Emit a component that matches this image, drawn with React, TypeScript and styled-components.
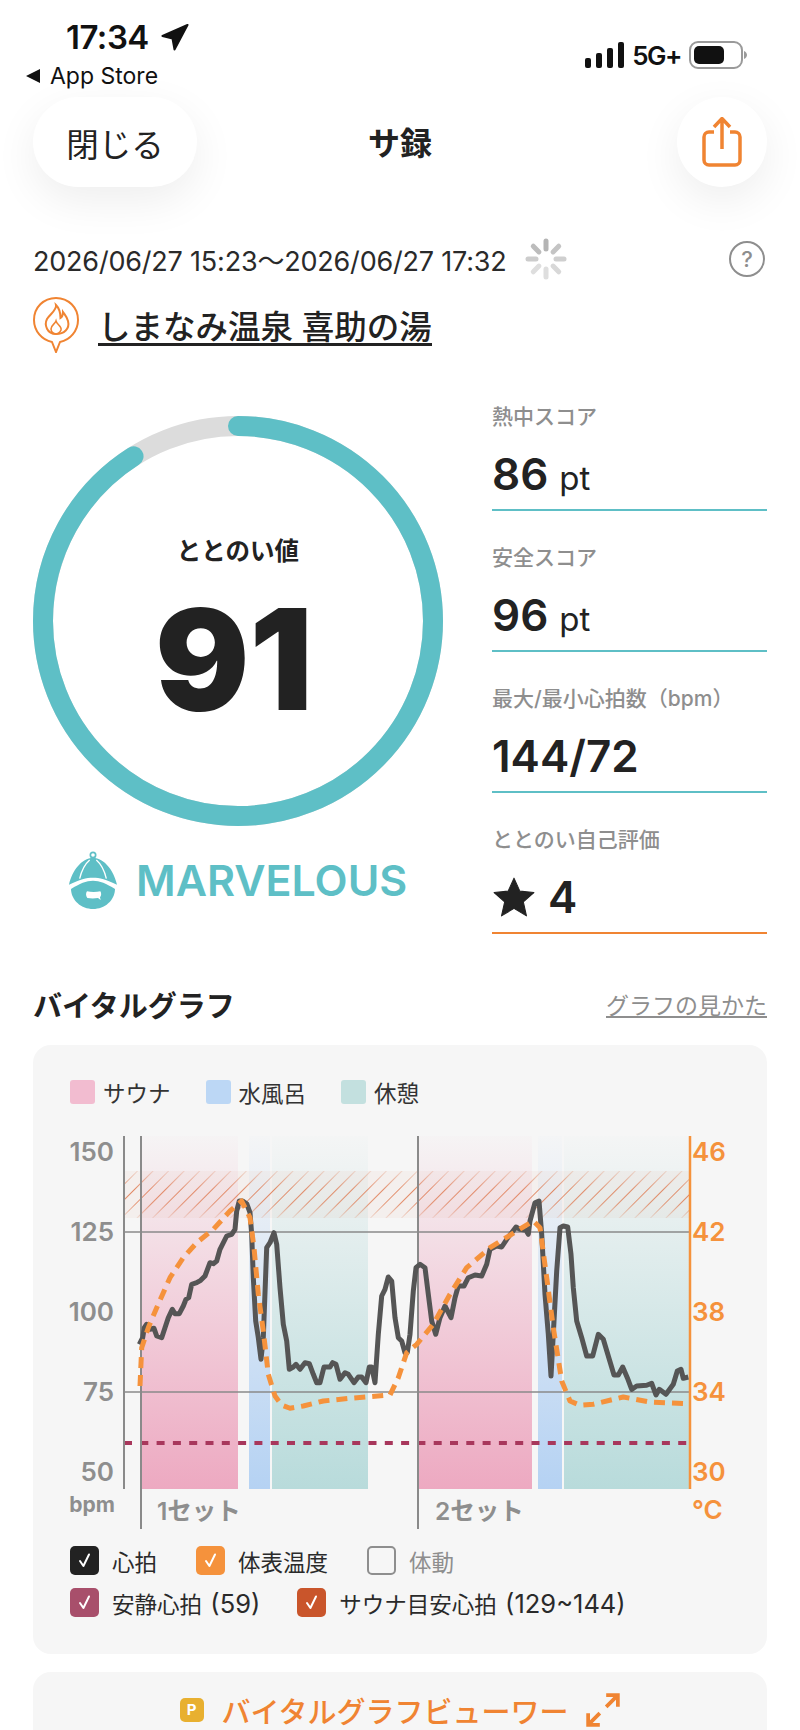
import React from 'react';
import styled, { createGlobalStyle } from 'styled-components';

const INK = '#222222';
const TEAL = '#5ebfc6';
const ORANGE = '#f08432';
const TEMP = '#f5923c';
const GREY = '#8e8e8e';

const GlobalStyle = createGlobalStyle`
    html, body {
        margin: 0;
        padding: 0;
        background: #fff;
    }
    body {
        font-family: Inter, "Noto Sans CJK JP", sans-serif;
        color: ${INK};
    }
    * {
        box-sizing: border-box;
    }
`;

// zoomed-crop coordinates of the traces, mapped back to page pixels below
const heartA = [
    [268, 670], [278, 650], [283, 620], [290, 610], [300, 625], [312, 622], [320, 645], [335, 650], [345, 620],
    [355, 590], [367, 565], [375, 578], [388, 578], [400, 555], [408, 535], [416, 530], [425, 490], [440, 485],
    [452, 478], [465, 465], [480, 425], [490, 428], [500, 420], [510, 385], [530, 345], [545, 340], [555, 325],
    [560, 270], [568, 240], [578, 240], [590, 248], [600, 275], [605, 340], [610, 470], [617, 600], [625, 650],
    [633, 715], [640, 650], [650, 380], [660, 365], [672, 335], [680, 370], [690, 500], [700, 610], [710, 660],
    [718, 745], [730, 738], [738, 730], [750, 745], [765, 725], [778, 728], [790, 760], [800, 785], [810, 785],
    [822, 738], [840, 738], [848, 725], [858, 730], [870, 775], [885, 755], [895, 760], [912, 785], [925, 768],
    [935, 768], [948, 785], [958, 738], [965, 738], [975, 785], [985, 640], [995, 525], [1005, 505], [1015, 468],
];
const heartB = [
    [5, 480], [15, 590], [25, 650], [35, 660], [45, 695], [52, 695], [60, 640], [70, 510], [78, 440], [90, 430],
    [105, 440], [115, 520], [125, 600], [137, 640], [150, 590], [165, 555], [183, 590], [195, 530], [205, 495],
    [222, 495], [235, 470], [255, 462], [275, 465], [290, 430], [300, 385], [320, 375], [335, 378], [350, 355],
    [378, 318], [390, 325], [408, 328], [415, 340], [420, 300], [435, 245], [447, 240], [455, 340], [465, 520],
    [475, 640], [483, 765], [492, 600], [500, 450], [510, 320], [520, 315], [533, 318], [543, 400], [550, 500],
    [560, 600], [575, 650], [590, 705], [608, 705], [625, 640], [640, 655], [655, 705], [672, 762], [685, 762],
    [698, 738], [712, 770], [725, 805], [740, 795], [770, 793], [785, 787], [798, 822], [808, 805], [828, 820],
    [850, 790], [862, 750], [873, 745], [880, 772], [895, 768],
];
const tempA = [
    [270, 795], [275, 680], [295, 620], [320, 560], [360, 470], [400, 410], [440, 365], [490, 325], [540, 270],
    [575, 240], [600, 290], [612, 380], [625, 520], [640, 630], [655, 760], [675, 825], [695, 852], [720, 862],
    [760, 855], [820, 840], [900, 832], [1020, 822],
];
const tempB = [
    [25, 770], [50, 695], [80, 670], [130, 610], [180, 520], [230, 440], [300, 380], [380, 330], [430, 300],
    [450, 320], [470, 470], [490, 620], [515, 780], [540, 840], [570, 853], [610, 850], [700, 828], [780, 843],
    [900, 848],
];

function toPoints(a: number[][], b: number[][]) {
    const left = a.map(([x, y]) => `${(x / 3 + 50).toFixed(1)},${(y / 3 + 1120).toFixed(1)}`);
    const right = b.map(([x, y]) => `${(x / 3 + 390).toFixed(1)},${(y / 3 + 1120).toFixed(1)}`);
    return [...left, ...right].join(' ');
}

const spinnerRays = [0, 45, 90, 135, 180, 225, 270, 315];
const spinnerShades = ['#b4b4b4', '#c4c4c4', '#cfcfcf', '#d8d8d8', '#dedede', '#dedede', '#cccccc', '#bcbcbc'];

const bpmTicks = [
    { label: '150', y: 1160 },
    { label: '125', y: 1240 },
    { label: '100', y: 1320 },
    { label: '75', y: 1400 },
    { label: '50', y: 1480 },
];
const tempTicks = [
    { label: '46', y: 1160 },
    { label: '42', y: 1240 },
    { label: '38', y: 1320 },
    { label: '34', y: 1400 },
    { label: '30', y: 1480 },
];

const bands = [
    { x: 141, w: 97, fill: 'url(#sauna)' },
    { x: 249, w: 21, fill: 'url(#cold)' },
    { x: 272, w: 96, fill: 'url(#rest)' },
    { x: 418, w: 114, fill: 'url(#sauna)' },
    { x: 538, w: 24, fill: 'url(#cold)' },
    { x: 564, w: 126, fill: 'url(#rest)' },
];

function VitalChart() {
    return (
        <ChartSvg viewBox="33 1125 734 410">
            <defs>
                <linearGradient id="sauna" x1="0" y1="0" x2="0" y2="1">
                    <stop offset="0" stopColor="#eda9c1" stopOpacity="0.03" />
                    <stop offset="1" stopColor="#eda9c1" />
                </linearGradient>
                <linearGradient id="cold" x1="0" y1="0" x2="0" y2="1">
                    <stop offset="0" stopColor="#b5d2f3" stopOpacity="0.03" />
                    <stop offset="1" stopColor="#b5d2f3" />
                </linearGradient>
                <linearGradient id="rest" x1="0" y1="0" x2="0" y2="1">
                    <stop offset="0" stopColor="#b8dbdb" stopOpacity="0.03" />
                    <stop offset="1" stopColor="#b8dbdb" />
                </linearGradient>
                <pattern id="hatch" width="11" height="11" patternUnits="userSpaceOnUse" patternTransform="rotate(45)">
                    <line x1="0" y1="0" x2="0" y2="11" stroke="#dc6a3c" strokeWidth="1.9" strokeOpacity="0.8" />
                </pattern>
                <linearGradient id="hatchFade" x1="0" y1="0" x2="0" y2="1">
                    <stop offset="0" stopColor="#fff" stopOpacity="0.25" />
                    <stop offset="0.4" stopColor="#fff" stopOpacity="1" />
                    <stop offset="0.7" stopColor="#fff" stopOpacity="0.9" />
                    <stop offset="1" stopColor="#fff" stopOpacity="0.2" />
                </linearGradient>
                <mask id="hatchMask">
                    <rect x={124} y={1170} width={566} height={47} fill="url(#hatchFade)" />
                </mask>
            </defs>
            {bands.map((band) => (
                <rect key={band.x} x={band.x} y={1135} width={band.w} height={353} fill={band.fill} />
            ))}
            <rect x={124} y={1170} width={566} height={47} fill="#e8a080" fillOpacity="0.07" />
            <rect x={124} y={1170} width={566} height={47} fill="url(#hatch)" mask="url(#hatchMask)" />
            <line x1={124} y1={1231} x2={690} y2={1231} stroke="#8a8a8a" strokeWidth="1.5" />
            <line x1={124} y1={1391} x2={690} y2={1391} stroke="#8a8a8a" strokeWidth="1.5" />
            <line x1={124} y1={1442} x2={690} y2={1442} stroke="#a8375c" strokeWidth="4" strokeDasharray="8 8.3" />
            <line x1={124} y1={1135} x2={124} y2={1488} stroke="#8a8a8a" strokeWidth="2" />
            <line x1={141} y1={1135} x2={141} y2={1528} stroke="#8a8a8a" strokeWidth="2" />
            <line x1={418} y1={1135} x2={418} y2={1528} stroke="#8a8a8a" strokeWidth="2" />
            <line x1={690} y1={1135} x2={690} y2={1488} stroke={TEMP} strokeWidth="2.5" />
            <polyline
                points={toPoints(heartA, heartB)}
                fill="none"
                stroke="#555555"
                strokeWidth="5"
                strokeLinejoin="round"
            />
            <polyline
                points={toPoints(tempA, tempB)}
                fill="none"
                stroke={TEMP}
                strokeWidth="5"
                strokeDasharray="11 7"
                strokeLinejoin="round"
            />
            {bpmTicks.map((tick) => (
                <AxisText key={tick.label} x={114} y={tick.y} textAnchor="end">{tick.label}</AxisText>
            ))}
            {tempTicks.map((tick) => (
                <AxisText key={tick.label} x={692} y={tick.y} $hot>{tick.label}</AxisText>
            ))}
            <UnitText x={115} y={1511} textAnchor="end">bpm</UnitText>
            <AxisText x={692} y={1518} $hot>°C</AxisText>
            <SetText x={157} y={1519}>1セット</SetText>
            <SetText x={435} y={1519}>2セット</SetText>
        </ChartSvg>
    );
}

function Check() {
    return (
        <svg width="17" height="17" viewBox="0 0 17 17">
            <path d="M4 9l3.4 5L13 2.5" fill="none" stroke="#fff" strokeWidth="2" strokeLinecap="round" strokeLinejoin="round" />
        </svg>
    );
}

function HatIcon() {
    return (
        <svg width="54" height="60" viewBox="20 30 160 180">
            <circle cx="100" cy="45" r="8" fill="none" stroke={TEAL} strokeWidth="5" />
            <path d="M100 53C65 56 38 90 28 134 60 118 80 113 100 113 120 113 140 118 172 134 162 90 135 56 100 53z" fill={TEAL} />
            <path d="M60 116C66 90 76 72 90 60M140 116C134 90 124 72 110 60" fill="none" stroke="#fff" strokeWidth="4" />
            <path d="M34 147C60 130 80 122 100 122 120 122 140 130 166 147 165 182 135 207 100 207 65 207 35 182 34 147z" fill={TEAL} />
            <path d="M22 142C60 122 80 118 100 118 120 118 140 122 178 142" fill="none" stroke="#fff" strokeWidth="3" />
            <path d="M82 154c12 3 28 3 40 0 4 6 3 14-1 18l2 8-8-6c-10 2-22 2-32 0-5-6-5-14-1-20z" fill="#fff" />
        </svg>
    );
}

export default function App() {
    return (
        <Page>
            <GlobalStyle />
            <StatusBar>
                <StatusLeft>
                    <TimeRow>
                        <Clock>17:34</Clock>
                        <svg width="28" height="27" viewBox="0 0 28 27">
                            <path d="M26.500 1L1.500 12 11.500 14.500 13.500 25.500z" fill="#111" strokeLinejoin="round" stroke="#111" strokeWidth="2" />
                        </svg>
                    </TimeRow>
                    <BackRow>
                        <svg width="14" height="14" viewBox="0 0 14 14">
                            <path d="M14 0v14L0 7z" fill="#111" />
                        </svg>
                        <BackLabel>App Store</BackLabel>
                    </BackRow>
                </StatusLeft>
                <StatusRight>
                    <svg width="39" height="26" viewBox="0 0 39 26">
                        <rect x="0" y="16" width="6" height="10" rx="2" fill="#111" />
                        <rect x="11" y="11" width="6" height="15" rx="2" fill="#111" />
                        <rect x="22" y="6" width="6" height="20" rx="2" fill="#111" />
                        <rect x="33" y="0" width="6" height="26" rx="2" fill="#111" />
                    </svg>
                    <Network>5G+</Network>
                    <svg width="58" height="28" viewBox="0 0 58 28">
                        <rect x="1" y="1" width="52" height="26" rx="8" fill="none" stroke="#9a9a9a" strokeWidth="2" />
                        <rect x="5" y="5" width="30" height="18" rx="5" fill="#111" />
                        <path d="M55 10c2 1 3 2.500 3 4s-1 3-3 4z" fill="#9a9a9a" />
                    </svg>
                </StatusRight>
            </StatusBar>

            <NavBar>
                <CloseButton>閉じる</CloseButton>
                <NavTitle>サ録</NavTitle>
                <ShareButton>
                    <svg width="40" height="50" viewBox="0 0 40 50">
                        <path d="M12 15H7a5 5 0 0 0-5 5v23a5 5 0 0 0 5 5h26a5 5 0 0 0 5-5V20a5 5 0 0 0-5-5h-5" fill="none" stroke={ORANGE} strokeWidth="3.500" />
                        <path d="M20 32V2M12 10l8-8.500 8 8.500" fill="none" stroke={ORANGE} strokeWidth="3.500" />
                    </svg>
                </ShareButton>
            </NavBar>

            <DateRow>
                <DateText>2026/06/27 15:23～2026/06/27 17:32</DateText>
                <svg width="42" height="42" viewBox="-21 -21 42 42">
                    {spinnerRays.map((deg, i) => (
                        <line key={deg} x1="0" y1="-10" x2="0" y2="-18" stroke={spinnerShades[i]} strokeWidth="5" strokeLinecap="round" transform={`rotate(${deg})`} />
                    ))}
                </svg>
                <HelpIcon>?</HelpIcon>
            </DateRow>

            <PlaceRow>
                <svg width="46" height="56" viewBox="0 0 46 56">
                    <path d="M23 1C10.500 1 1 10.500 1 23c0 11 8 20 18 22l4 10 4-10c10-2 18-11 18-22C45 10.500 35.500 1 23 1z" fill="none" stroke={ORANGE} strokeWidth="2" />
                    <path d="M23 8C24 13 17 17 14 22 11 28 14 37 23 37 31 37 37 32 35 24 34 20 32 18 30 15 30 19 29 20 27.500 21 27.500 16 26 11 23 8z" fill="none" stroke={ORANGE} strokeWidth="2" />
                    <path d="M23 24C24 28 29 29 28 33 27 36 24 37 23 37 22 37 18 36 18 32 18 28 22 27 23 24z" fill="none" stroke={ORANGE} strokeWidth="1.6" />
                </svg>
                <PlaceName>しまなみ温泉 喜助の湯</PlaceName>
            </PlaceRow>

            <Summary>
                <ScoreColumn>
                    <RingBox>
                        <svg width="410" height="410" viewBox="0 0 410 410">
                            <circle cx="205" cy="205" r="195" fill="none" stroke="#dcdcdc" strokeWidth="20" />
                            <circle
                                cx="205"
                                cy="205"
                                r="195"
                                fill="none"
                                stroke={TEAL}
                                strokeWidth="20"
                                strokeLinecap="round"
                                pathLength="100"
                                strokeDasharray="91 100"
                                transform="rotate(-90 205 205)"
                            />
                        </svg>
                        <RingCenter>
                            <RingLabel>ととのい値</RingLabel>
                            <RingValue>91</RingValue>
                        </RingCenter>
                    </RingBox>
                    <RankRow>
                        <HatIcon />
                        <RankName>MARVELOUS</RankName>
                    </RankRow>
                </ScoreColumn>
                <StatColumn>
                    <Stat>
                        <StatLabel>熱中スコア</StatLabel>
                        <StatValue>86 <StatUnit>pt</StatUnit></StatValue>
                    </Stat>
                    <Stat>
                        <StatLabel>安全スコア</StatLabel>
                        <StatValue>96 <StatUnit>pt</StatUnit></StatValue>
                    </Stat>
                    <Stat>
                        <StatLabel>最大/最小心拍数（bpm）</StatLabel>
                        <StatValue>144/72</StatValue>
                    </Stat>
                    <Stat $accent={ORANGE}>
                        <StatLabel>ととのい自己評価</StatLabel>
                        <StatValue>
                            <svg width="44" height="40" viewBox="0 0 42 38">
                                <path d="M21 1l5.600 12.400 13.400 1.300-10.100 9 3 13.300L21 29.900 9.100 37l3-13.300L2 14.700l13.400-1.300z" fill={INK} stroke={INK} strokeLinejoin="round" />
                            </svg>
                            4
                        </StatValue>
                    </Stat>
                </StatColumn>
            </Summary>

            <SectionHead>
                <SectionTitle>バイタルグラフ</SectionTitle>
                <SectionLink>グラフの見かた</SectionLink>
            </SectionHead>

            <GraphCard>
                <Legend>
                    <LegendItem $color="#f2bcd0">サウナ</LegendItem>
                    <LegendItem $color="#bcd7f5">水風呂</LegendItem>
                    <LegendItem $color="#c3e0df">休憩</LegendItem>
                </Legend>
                <VitalChart />
                <ToggleRow>
                    <Toggle><ToggleBox $color="#222222"><Check /></ToggleBox><span>心拍</span></Toggle>
                    <Toggle><ToggleBox $color={TEMP}><Check /></ToggleBox><span>体表温度</span></Toggle>
                    <Toggle $off><ToggleBox /><span>体動</span></Toggle>
                </ToggleRow>
                <ToggleRow $gap={37}>
                    <Toggle><ToggleBox $color="#a84f6b"><Check /></ToggleBox><span>安静心拍 <ToggleFigure>(59)</ToggleFigure></span></Toggle>
                    <Toggle><ToggleBox $color="#c9552b"><Check /></ToggleBox><span>サウナ目安心拍 <ToggleFigure>(129~144)</ToggleFigure></span></Toggle>
                </ToggleRow>
            </GraphCard>

            <ViewerCard>
                <PremiumBadge>P</PremiumBadge>
                <ViewerLabel>バイタルグラフビューワー</ViewerLabel>
                <svg width="34" height="34" viewBox="0 0 32 32">
                    <path d="M19 2h11v11M30 2L19 13M2 19v11h11M2 30l11-11" fill="none" stroke={ORANGE} strokeWidth="3.500" />
                </svg>
            </ViewerCard>
        </Page>
    );
}

const Page = styled.div`
    width: 800px;
    height: 1730px;
    overflow: hidden;
    padding: 0 33px;
    background: #fff;
`;

const StatusBar = styled.div`
    display: flex;
    justify-content: space-between;
    height: 97px;
    margin: 0 -33px;
    padding: 22px 53px 0 26px;
`;

const StatusLeft = styled.div`
    display: flex;
    flex-direction: column;
`;

const TimeRow = styled.div`
    display: flex;
    align-items: center;
    gap: 12px;
    height: 30px;
    padding-left: 40px;
`;

const Clock = styled.span`
    font-size: 33px;
    font-weight: 600;
    letter-spacing: -0.5px;
    color: #111;
`;

const BackRow = styled.div`
    display: flex;
    align-items: center;
    gap: 10px;
    margin-top: 12px;
    height: 24px;
`;

const BackLabel = styled.span`
    font-size: 23px;
    color: #111;
`;

const StatusRight = styled.div`
    display: flex;
    align-items: center;
    gap: 8px;
    height: 26px;
    margin-top: 20px;
`;

const Network = styled.span`
    font-size: 26px;
    font-weight: 600;
    letter-spacing: -1.5px;
    color: #111;
`;

const NavBar = styled.div`
    display: grid;
    grid-template-columns: 1fr auto 1fr;
    align-items: center;
    height: 90px;
`;

const CloseButton = styled.div`
    width: 164px;
    height: 90px;
    display: flex;
    align-items: center;
    justify-content: center;
    border-radius: 45px;
    background: #fff;
    font-size: 32.5px;
    box-shadow: 0 14px 44px rgba(0, 0, 0, 0.07);
`;

const NavTitle = styled.div`
    font-size: 32px;
    font-weight: 700;
    margin-top: -2px;
`;

const ShareButton = styled.div`
    justify-self: end;
    width: 90px;
    height: 90px;
    display: flex;
    align-items: center;
    justify-content: center;
    border-radius: 50%;
    background: #fff;
    box-shadow: 0 14px 44px rgba(0, 0, 0, 0.07);
`;

const DateRow = styled.div`
    display: flex;
    align-items: center;
    gap: 18px;
    height: 42px;
    margin-top: 51px;
`;

const DateText = styled.span`
    font-size: 27px;
    letter-spacing: -0.2px;
    color: #2a2a2a;
    white-space: nowrap;
`;

const HelpIcon = styled.div`
    width: 36px;
    height: 36px;
    margin-left: auto;
    margin-right: 2px;
    display: flex;
    align-items: center;
    justify-content: center;
    border: 2.5px solid ${GREY};
    border-radius: 50%;
    font-size: 22px;
    font-weight: 500;
    color: ${GREY};
`;

const PlaceRow = styled.div`
    display: flex;
    align-items: flex-start;
    gap: 19px;
    margin-top: 17px;
    height: 60px;
`;

const PlaceName = styled.span`
    margin-top: 16px;
    font-size: 32.5px;
    font-weight: 500;
    line-height: 30px;
    border-bottom: 3px solid ${INK};
    white-space: nowrap;
`;

const Summary = styled.div`
    display: grid;
    grid-template-columns: 459px 275px;
    margin-top: 59px;
`;

const ScoreColumn = styled.div`
    display: flex;
    flex-direction: column;
`;

const RingBox = styled.div`
    position: relative;
    width: 410px;
    height: 410px;

    svg {
        display: block;
    }
`;

const RingCenter = styled.div`
    position: absolute;
    inset: 0;
    display: flex;
    flex-direction: column;
    align-items: center;
`;

const RingLabel = styled.div`
    margin-top: 118px;
    font-size: 24.5px;
    font-weight: 600;
    line-height: 34px;
`;

const RingValue = styled.div`
    margin-top: 8px;
    font-size: 140px;
    font-weight: 900;
    line-height: 166px;
    margin-left: -8px;
`;

const RankRow = styled.div`
    display: flex;
    align-items: center;
    gap: 16px;
    margin-top: 24px;
    padding-left: 33px;
`;

const RankName = styled.div`
    font-size: 43px;
    font-weight: 600;
    color: ${TEAL};
`;

const StatColumn = styled.div`
    display: flex;
    flex-direction: column;
    margin-top: -46.5px;
`;

const Stat = styled.div<{ $accent?: string }>`
    height: 141px;
    padding-top: 33px;
    border-bottom: 2px solid ${(p) => p.$accent || TEAL};
`;

const StatLabel = styled.div`
    font-size: 21px;
    font-weight: 500;
    line-height: 28px;
    color: ${GREY};
    white-space: nowrap;
`;

const StatValue = styled.div`
    display: flex;
    align-items: baseline;
    gap: 11px;
    margin-top: 17px;
    font-size: 44px;
    font-weight: 600;
    line-height: 52px;

    svg {
        align-self: center;
        margin-right: 1px;
    }
`;

const StatUnit = styled.span`
    font-size: 33px;
    font-weight: 400;
`;

const SectionHead = styled.div`
    display: flex;
    align-items: center;
    justify-content: space-between;
    height: 40px;
    margin-top: 50px;
`;

const SectionTitle = styled.div`
    font-size: 29px;
    font-weight: 600;
`;

const SectionLink = styled.div`
    font-size: 23px;
    color: ${GREY};
    text-decoration: underline;
`;

const GraphCard = styled.div`
    height: 609px;
    margin-top: 21px;
    padding: 35px 37px 0;
    background: #f6f6f6;
    border-radius: 18px;
`;

const Legend = styled.div`
    display: flex;
    gap: 35px;
    height: 24px;
`;

const LegendItem = styled.div<{ $color: string }>`
    display: flex;
    align-items: center;
    gap: 8px;
    font-size: 22.5px;
    color: #333;

    &::before {
        content: '';
        width: 25px;
        height: 24px;
        border-radius: 3px;
        background: ${(p) => p.$color};
    }
`;

const ChartSvg = styled.svg`
    display: block;
    width: 734px;
    height: 410px;
    margin: 22px -37px 4px;
`;

const AxisText = styled.text<{ $hot?: boolean }>`
    font-size: 26px;
    font-weight: 600;
    fill: ${(p) => (p.$hot ? TEMP : GREY)};
`;

const UnitText = styled.text`
    font-size: 21px;
    font-weight: 700;
    fill: ${GREY};
`;

const SetText = styled.text`
    font-size: 24.5px;
    font-weight: 600;
    fill: ${GREY};
`;

const ToggleRow = styled.div<{ $gap?: number }>`
    display: flex;
    gap: ${(p) => p.$gap || 39}px;
    height: 42px;
    align-items: center;
`;

const Toggle = styled.div<{ $off?: boolean }>`
    display: flex;
    align-items: center;
    gap: 13px;
    font-size: 22.5px;
    white-space: nowrap;
    color: ${(p) => (p.$off ? GREY : '#2a2a2a')};
`;

const ToggleBox = styled.div<{ $color?: string }>`
    width: 29px;
    height: 29px;
    display: flex;
    align-items: center;
    justify-content: center;
    border-radius: 5px;
    background: ${(p) => p.$color || 'transparent'};
    border: ${(p) => (p.$color ? 'none' : `2.5px solid ${GREY}`)};
`;

const ToggleFigure = styled.span`
    font-size: 25.5px;
    margin-left: 2px;
`;

const ViewerCard = styled.div`
    display: flex;
    align-items: center;
    justify-content: center;
    gap: 18px;
    height: 76px;
    margin-top: 18px;
    background: #f6f6f6;
    border-radius: 18px 18px 0 0;
`;

const PremiumBadge = styled.div`
    width: 24px;
    height: 24px;
    display: flex;
    align-items: center;
    justify-content: center;
    border-radius: 5px;
    background: #e8b030;
    color: #fff;
    font-size: 15px;
    font-weight: 700;
`;

const ViewerLabel = styled.div`
    font-size: 29px;
    font-weight: 500;
    color: ${ORANGE};
`;
